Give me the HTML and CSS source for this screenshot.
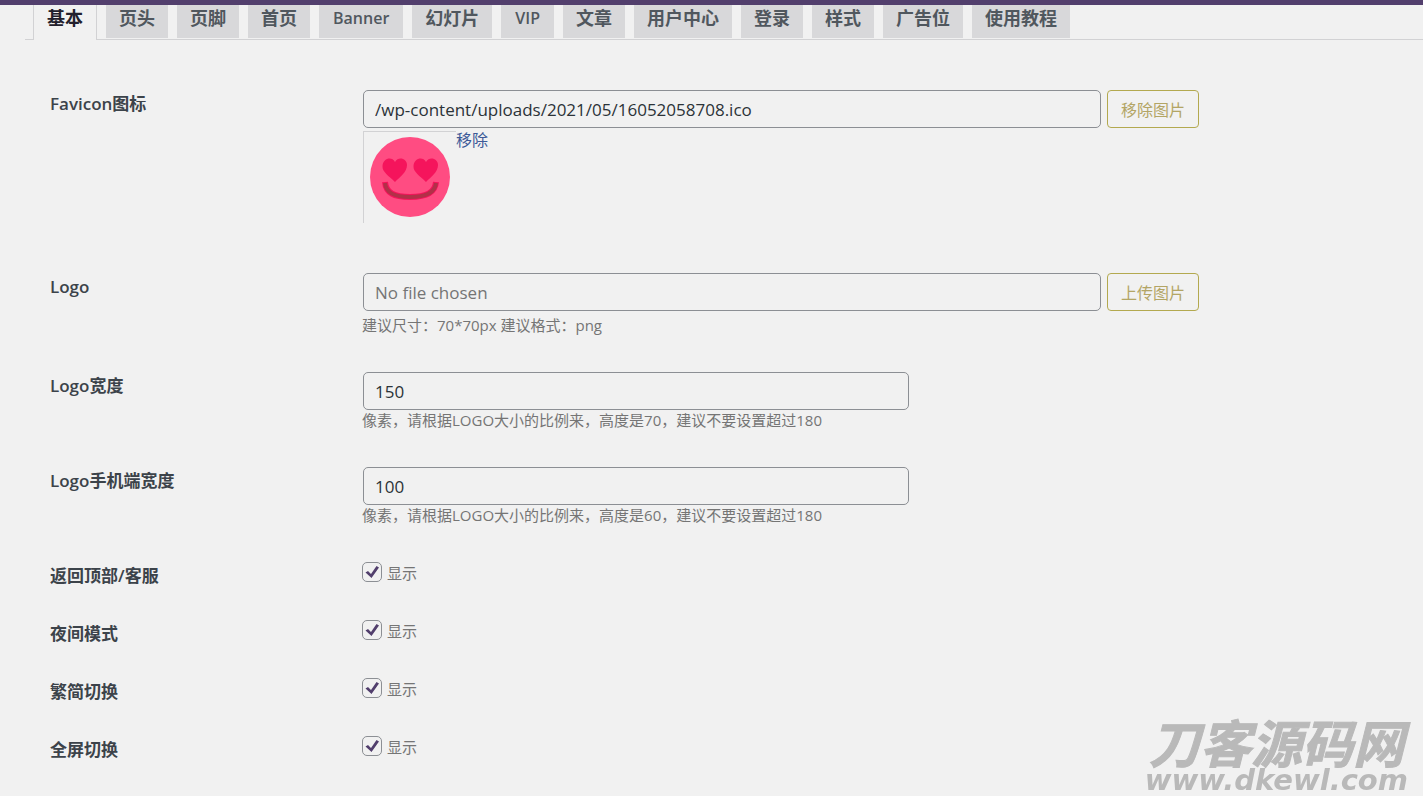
FILE: index.html
```html
<!DOCTYPE html>
<html lang="zh-CN">

<head>
  <meta charset="utf-8">
  <title>主题设置</title>
  <link rel="stylesheet" href="styles.css">
</head>

<body>
  <header class="topbar"></header>

  <nav class="tabs">
    <a class="tab active" href="#basic">基本</a>
    <a class="tab" href="#header">页头</a>
    <a class="tab" href="#footer">页脚</a>
    <a class="tab" href="#home">首页</a>
    <a class="tab latin" href="#banner">Banner</a>
    <a class="tab" href="#slides">幻灯片</a>
    <a class="tab latin" href="#vip">VIP</a>
    <a class="tab" href="#posts">文章</a>
    <a class="tab" href="#user">用户中心</a>
    <a class="tab" href="#login">登录</a>
    <a class="tab" href="#style">样式</a>
    <a class="tab" href="#ads">广告位</a>
    <a class="tab" href="#docs">使用教程</a>
  </nav>

  <form class="options" id="basic">
    <div class="row row-favicon">
      <label class="name" for="favicon">Favicon图标</label>
      <div class="field">
        <div class="upload">
          <input class="text" type="text" id="favicon" value="/wp-content/uploads/2021/05/16052058708.ico">
          <button class="button" type="button">移除图片</button>
        </div>
        <div class="screenshot">
          <div class="frame">
            <svg class="face" viewBox="0 0 80 80" aria-hidden="true">
              <circle cx="40" cy="40" r="40" fill="#ff4c82"/>
              <path d="M25 45C19 39 12 35 12.500 29C13 21 22 19 25 25C28 19 37 21 37 28C37 35 30 40 25 45Z" fill="#f5145c"/>
              <path d="M56 45C50 39 43 35 43.500 29C44 21 53 19 56 25C59 19 68 21 68 28C68 35 61 40 56 45Z" fill="#f5145c"/>
              <path d="M15 45C16 56 24 60 40 60C56 60 65 56 66 45" fill="none" stroke="#f5145c" stroke-width="6"/>
              <path d="M15 46C16 56 24 60 40 60C56 60 65 56 66 46" fill="none" stroke="#b23048" stroke-width="4"/>
            </svg>
          </div>
          <a class="remove" href="#remove">移除</a>
        </div>
      </div>
    </div>

    <div class="row">
      <label class="name" for="logo">Logo</label>
      <div class="field">
        <div class="upload">
          <input class="text" type="text" id="logo" placeholder="No file chosen">
          <button class="button" type="button">上传图片</button>
        </div>
        <p class="explain upload-explain">建议尺寸：70*70px 建议格式：png</p>
      </div>
    </div>

    <div class="row">
      <label class="name" for="logo-width">Logo宽度</label>
      <div class="field">
        <input class="text short" type="text" id="logo-width" value="150">
        <p class="explain">像素，请根据LOGO大小的比例来，高度是70，建议不要设置超过180</p>
      </div>
    </div>

    <div class="row">
      <label class="name" for="logo-width-m">Logo手机端宽度</label>
      <div class="field">
        <input class="text short" type="text" id="logo-width-m" value="100">
        <p class="explain">像素，请根据LOGO大小的比例来，高度是60，建议不要设置超过180</p>
      </div>
    </div>

    <div class="row">
      <span class="name">返回顶部/客服</span>
      <label class="field check"><input type="checkbox" checked>显示</label>
    </div>
    <div class="row">
      <span class="name">夜间模式</span>
      <label class="field check"><input type="checkbox" checked>显示</label>
    </div>
    <div class="row">
      <span class="name">繁简切换</span>
      <label class="field check"><input type="checkbox" checked>显示</label>
    </div>
    <div class="row">
      <span class="name">全屏切换</span>
      <label class="field check"><input type="checkbox" checked>显示</label>
    </div>
  </form>

  <div class="watermark">
    <div class="mark-name">刀客源码网</div>
    <div class="mark-url">www.dkewl.com</div>
  </div>
</body>

</html>
```
FILE: styles.css
```css
* {
  box-sizing: border-box;
}
body {
  margin: 0;
  background: #f1f1f1;
  color: #3c434a;
  font-family: "Open Sans", "Noto Sans CJK SC", sans-serif;
  font-size: 16px;
}
.topbar {
  height: 5px;
  background: #523f6d;
}

/* tabs */
.tabs {
  display: flex;
  gap: 9px;
  margin-left: 25px;
  padding-left: 8px;
  border-bottom: 1px solid #d2d2d4;
}
.tab {
  height: 33px;
  margin-bottom: 1px;
  padding: 0 13px;
  background: #d8d8da;
  color: #50575e;
  font-size: 18px;
  font-weight: 600;
  line-height: 26px;
  text-decoration: none;
  white-space: nowrap;
}
.tab.latin {
  padding: 0 14px;
  font-size: 16px;
}
.tab.active {
  height: 35px;
  margin-bottom: -1px;
  border: solid #d2d2d4;
  border-width: 0 1px;
  background: #f1f1f1;
  color: #23202c;
}

/* options */
.options {
  padding: 32px 50px 0;
}
.row {
  display: grid;
  grid-template-columns: 312px 1fr;
  padding: 18px 0;
}
.row-favicon {
  padding-bottom: 32px;
}
.name {
  margin-bottom: -4px;
  padding-top: 2px;
  font-size: 17px;
  font-weight: 600;
  line-height: 24px;
}
.upload {
  display: flex;
  gap: 6px;
}
.text {
  display: block;
  width: 73%;
  height: 38px;
  margin: 0 0 0 1px;
  padding: 0 11px;
  border: 1px solid #8c8f94;
  border-radius: 5px;
  background: #f1f1f1;
  color: #2c3338;
  font: inherit;
  font-size: 17px;
}
.text::placeholder {
  color: #757575;
  opacity: 1;
}
.text.short {
  width: 54%;
}
.button {
  width: 92px;
  height: 38px;
  padding: 0;
  border: 1px solid #b3a94f;
  border-radius: 4px;
  background: #f1f1f1;
  color: #b3a565;
  font: inherit;
}
.explain {
  margin: 0;
  color: #757575;
  font-size: 15px;
  line-height: 21px;
}
.upload-explain {
  padding-top: 4px;
}
.screenshot {
  display: flex;
  align-items: flex-start;
  margin: 3px 0 0 1px;
}
.frame {
  width: 93px;
  height: 92px;
  padding: 5px 6px;
  border: solid #d2d2d4;
  border-width: 1px 0 0 1px;
}
.face {
  display: block;
  width: 80px;
  height: 80px;
}
.remove {
  color: #3d5a98;
  line-height: 19px;
  text-decoration: none;
}

/* checkboxes */
.check {
  display: flex;
  gap: 5px;
  color: #757575;
  font-size: 15px;
  line-height: 22px;
}
.check input {
  appearance: none;
  width: 20px;
  height: 20px;
  margin: 0;
  border: 1px solid #8c8f94;
  border-radius: 5px;
}
.check input:checked {
  background: url("data:image/svg+xml,%3Csvg xmlns='http://www.w3.org/2000/svg' viewBox='0 0 18 18'%3E%3Cpath d='M2.500 9.500L5 8L8 11L13.500 3L16 4.500L8.500 15Z' fill='%23523f6d'/%3E%3C/svg%3E") center / 18px no-repeat;
}

.watermark {
  position: fixed;
  right: 15px;
  bottom: 4px;
  color: #b9b9b9;
  font-style: italic;
  font-weight: bold;
  text-align: right;
}
.mark-name {
  padding-right: 4px;
  font-family: "Noto Sans CJK SC", sans-serif;
  font-size: 51px;
  line-height: 54px;
  -webkit-text-stroke: 1px #b9b9b9;
}
.mark-url {
  font-family: "DejaVu Sans", sans-serif;
  font-size: 29px;
  line-height: 24px;
}
```
